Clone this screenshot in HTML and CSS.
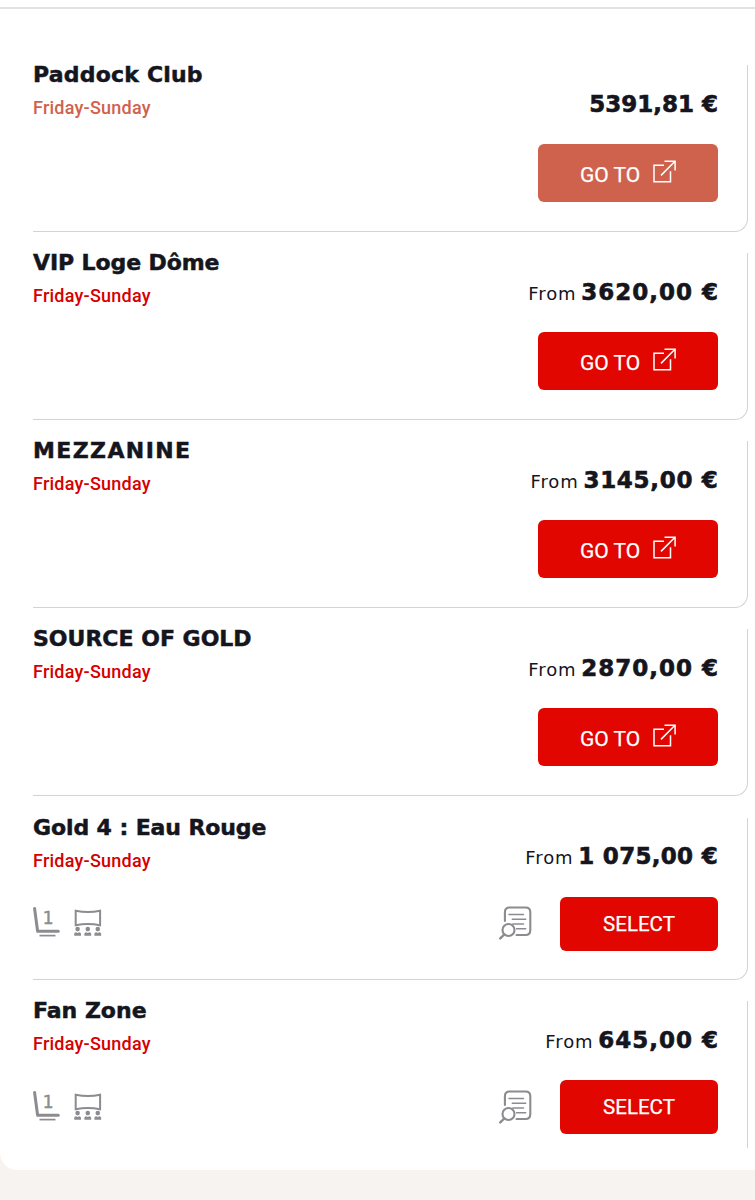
FILE: index.html
```
<!DOCTYPE html>
<html lang="en">
<head>
    <meta charset="UTF-8">
    <meta name="viewport" content="width=device-width, initial-scale=1.0">
    <title>Tickets</title>
    <link rel="stylesheet" href="styles.css">
</head>
<body>
    <!-- icons used in the list -->
    <svg class="sprite">
        <symbol id="external" viewBox="0 0 23 23">
            <path d="M11 5.3H1v16.5h16.5V11.3M8 15.4L22 1.3M11.5 1.2H22.1V10.4" fill="none" stroke="currentColor" stroke-width="1.5"/>
        </symbol>
        <symbol id="seat" viewBox="0 0 27 31">
            <path d="M1.6 2.6L4.6 25.2H25.3" fill="none" stroke="currentColor" stroke-width="3" stroke-linecap="round" stroke-linejoin="round"/>
            <path d="M6.5 29.6H22.5" stroke="currentColor" stroke-width="1.7"/>
            <text x="9.8" y="18.2" class="seat-num">1</text>
        </symbol>
        <symbol id="screen" viewBox="0 0 28 31">
            <path d="M1.7 4.8Q14 7.4 26.1 4.8V19.3Q14 16.6 1.7 19.3Z" fill="none" stroke="currentColor" stroke-width="2"/>
            <g fill="currentColor">
                <circle cx="3.6" cy="23.1" r="2.3"/>
                <circle cx="13.8" cy="23.1" r="2.3"/>
                <circle cx="23.8" cy="23.1" r="2.3"/>
                <path d="M.2 29.8V28Q.2 26.2 2 26.2L3.6 27 5.2 26.2Q7 26.2 7 28V29.8ZM10.4 29.8V28Q10.4 26.2 12.2 26.2L13.8 27 15.4 26.2Q17.2 26.2 17.2 28V29.8ZM20.4 29.8V28Q20.4 26.2 22.2 26.2L23.8 27 25.4 26.2Q27.2 26.2 27.2 28V29.8Z"/>
            </g>
        </symbol>
        <symbol id="details" viewBox="0 0 34 35">
            <g fill="none" stroke="currentColor" stroke-linecap="round">
                <path d="M5.9 15V6.2Q5.9 1.5 10.6 1.5H26.6Q31.3 1.5 31.3 6.2V24.3Q31.3 29 26.6 29H17.5" stroke-width="2.1"/>
                <path d="M10 8.5H24.5M13.3 13.2H26.7M13.8 18H24.5M17.5 22.8H26.7" stroke-width="1.5"/>
                <circle cx="9.5" cy="24" r="6" stroke-width="2.1"/>
                <path d="M5.2 28.5L1.3 32.4" stroke-width="2.4"/>
            </g>
        </symbol>
    </svg>

    <div class="card">
        <div class="tickets">
            <div class="ticket">
                <div class="info">
                    <h3 class="name wide">Paddock Club</h3>
                    <div class="days faded">Friday-Sunday</div>
                </div>
                <div class="buy">
                    <div class="price"><b>5391,81 €</b></div>
                    <a class="btn go off"><span>GO TO</span><svg class="external"><use href="#external"/></svg></a>
                </div>
            </div>

            <div class="ticket">
                <div class="info">
                    <h3 class="name tight">VIP Loge Dôme</h3>
                    <div class="days">Friday-Sunday</div>
                </div>
                <div class="buy">
                    <div class="price wide"><span>From</span> <b>3620,00 €</b></div>
                    <a class="btn go"><span>GO TO</span><svg class="external"><use href="#external"/></svg></a>
                </div>
            </div>

            <div class="ticket">
                <div class="info">
                    <h3 class="name spaced">MEZZANINE</h3>
                    <div class="days">Friday-Sunday</div>
                </div>
                <div class="buy">
                    <div class="price mid"><span>From</span> <b>3145,00 €</b></div>
                    <a class="btn go"><span>GO TO</span><svg class="external"><use href="#external"/></svg></a>
                </div>
            </div>

            <div class="ticket">
                <div class="info">
                    <h3 class="name">SOURCE OF GOLD</h3>
                    <div class="days">Friday-Sunday</div>
                </div>
                <div class="buy">
                    <div class="price wide"><span>From</span> <b>2870,00 €</b></div>
                    <a class="btn go"><span>GO TO</span><svg class="external"><use href="#external"/></svg></a>
                </div>
            </div>

            <div class="ticket short">
                <div class="info">
                    <h3 class="name tight">Gold 4 : Eau Rouge</h3>
                    <div class="days">Friday-Sunday</div>
                    <div class="icons">
                        <svg class="seat"><use href="#seat"/></svg>
                        <svg class="screen"><use href="#screen"/></svg>
                    </div>
                </div>
                <div class="buy">
                    <div class="price long"><span>From</span> <b>1 075,00 €</b></div>
                    <div class="actions">
                        <svg class="details"><use href="#details"/></svg>
                        <a class="btn select">SELECT</a>
                    </div>
                </div>
            </div>

            <div class="ticket last">
                <div class="info">
                    <h3 class="name">Fan Zone</h3>
                    <div class="days">Friday-Sunday</div>
                    <div class="icons">
                        <svg class="seat"><use href="#seat"/></svg>
                        <svg class="screen"><use href="#screen"/></svg>
                    </div>
                </div>
                <div class="buy">
                    <div class="price wide"><span>From</span> <b>645,00 €</b></div>
                    <div class="actions">
                        <svg class="details"><use href="#details"/></svg>
                        <a class="btn select">SELECT</a>
                    </div>
                </div>
            </div>
        </div>
    </div>
</body>
</html>
```
FILE: styles.css
```
*{
    box-sizing: border-box;
}

body{
    margin: 0;
    height: 1200px;
    overflow: hidden;
    background-color: #f7f3f0;
    color: #15151e;
    font-family: "DejaVu Sans", sans-serif;
}

.sprite{
    display: none;
}

.card{
    height: 1170px;
    padding-top: 7px;
    background-color: white;
    border-bottom-left-radius: 17px;
}

.tickets{
    border-top: 2px solid #e2e2e3;
    padding: 56px 7px 0 33px;
}

.ticket{
    display: flex;
    justify-content: space-between;
    height: 167px;
    margin-bottom: 21.15px;
    padding-right: 29px;
    border-right: 1px solid #d3d3d6;
    border-bottom: 1px solid #d3d3d6;
    border-bottom-right-radius: 13px;
}

.ticket.short{
    height: 162.7px;
}

.ticket.last{
    height: 147px;
    border-bottom: none;
    border-radius: 0;
}

.name{
    margin: 0;
    font-size: 22px;
    line-height: 20px;
    font-weight: bold;
    -webkit-text-stroke: 0.5px #15151e;
}

.name.wide{
    letter-spacing: 0.2px;
}

.name.spaced{
    letter-spacing: 1.4px;
}

.name.tight{
    letter-spacing: -0.1px;
}

.days{
    margin-top: 13px;
    font-family: Roboto, sans-serif;
    font-size: 18px;
    line-height: 20px;
    font-weight: 500;
    letter-spacing: 0.23px;
    color: #d50000;
}

.days.faded{
    color: #cf624c;
}

.icons{
    display: flex;
    gap: 14px;
    margin-top: 35.5px;
    color: #8c8c90;
}

.seat{
    width: 27px;
    height: 31px;
}

.seat-num{
    font-family: "DejaVu Sans", sans-serif;
    font-size: 17px;
    fill: currentColor;
    stroke: currentColor;
    stroke-width: 0.5px;
}

.screen{
    width: 28px;
    height: 31px;
}

.buy{
    display: flex;
    flex-direction: column;
    align-items: flex-end;
}

.price{
    margin-top: 25.5px;
    margin-bottom: 25.5px;
    font-size: 18px;
    line-height: 27px;
    white-space: nowrap;
}

.price span{
    letter-spacing: 0.9px;
    margin-right: -1px;
}

.price b{
    font-size: 23px;
    letter-spacing: 0;
    -webkit-text-stroke: 0.6px #15151e;
}

.price.long b{
    letter-spacing: 0.3px;
}

.price.mid b{
    letter-spacing: 0.7px;
    margin-right: -0.5px;
}

.price.wide b{
    letter-spacing: 1px;
    margin-right: -1px;
}

.actions{
    display: flex;
    align-items: center;
    gap: 27px;
}

.details{
    width: 34px;
    height: 35px;
    color: #8c8c90;
}

.btn{
    display: flex;
    align-items: center;
    justify-content: center;
    border-radius: 6px;
    background-color: #e10600;
    color: white;
    font-family: Roboto, sans-serif;
    font-size: 21px;
    -webkit-text-stroke: 0.25px white;
}

.go{
    width: 180px;
    height: 58px;
    gap: 13px;
}

.go span{
    padding-top: 4px;
}

.off{
    background-color: #cf624c;
}

.select{
    width: 158px;
    height: 54px;
    font-size: 20.5px;
}

.external{
    width: 23px;
    height: 23px;
    margin-bottom: 3px;
}
```
